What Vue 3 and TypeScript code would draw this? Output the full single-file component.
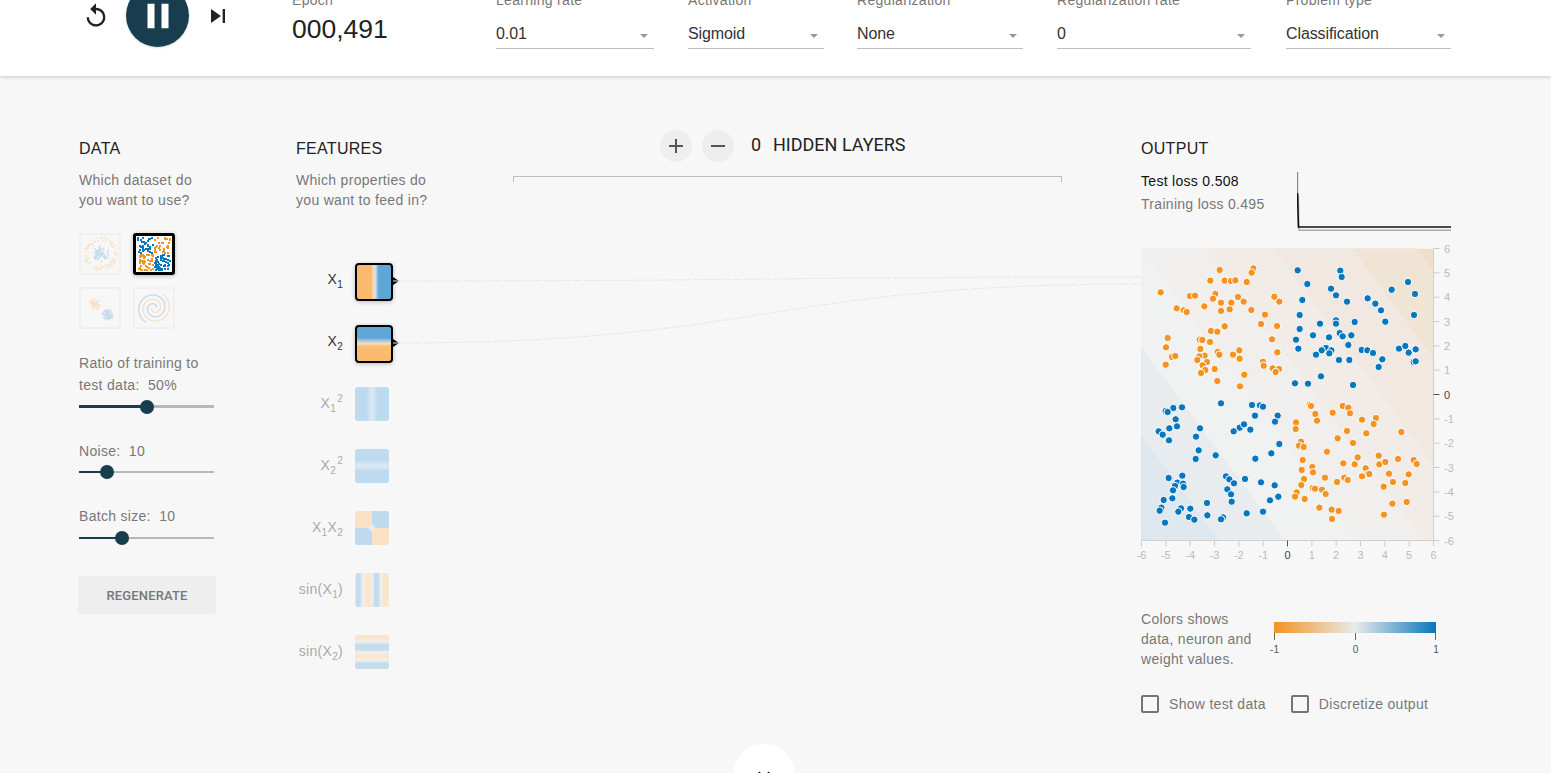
<template>
  <div class="page">
    <header class="top">
      <div class="controls">
        <svg class="icon replay" viewBox="0 0 24 24"><path d="M12 5V1L7 6l5 5V7c3.31 0 6 2.69 6 6s-2.69 6-6 6-6-2.69-6-6H4c0 4.42 3.58 8 8 8s8-3.58 8-8-3.58-8-8-8z" /></svg>
        <div class="play">
          <svg viewBox="0 0 24 24"><path d="M6 19h4V5H6v14zm8-14v14h4V5h-4z" /></svg>
        </div>
        <svg class="icon skip" viewBox="0 0 24 24"><path d="M6 18l8.5-6L6 6v12zM16 6v12h2V6h-2z" /></svg>
      </div>
      <div class="epoch">
        <div class="top-label">Epoch</div>
        <div class="epoch-value">000,491</div>
      </div>
      <div class="selects">
        <div v-for="s in selects" :key="s.label" class="select" :style="{ width: s.width + 'px', marginRight: s.gap + 'px' }">
          <div class="top-label">{{ s.label }}</div>
          <div class="select-field">
            <span>{{ s.value }}</span>
            <i class="caret"></i>
          </div>
        </div>
      </div>
    </header>

    <main class="main">
      <section class="data">
        <h4>DATA</h4>
        <p class="desc">Which dataset do<br />you want to use?</p>
        <div class="datasets">
          <div class="dataset">
            <svg viewBox="0 0 38 38"><rect v-for="(p, i) in circleDots" :key="i" :x="p.x" :y="p.y" width="1.6" height="1.6" :fill="p.c" /></svg>
          </div>
          <div class="dataset selected">
            <svg viewBox="0 0 36 36"><rect v-for="(p, i) in xorDots" :key="i" :x="p.x" :y="p.y" width="2" height="2" :fill="p.c" /></svg>
          </div>
          <div class="dataset">
            <svg viewBox="0 0 38 38"><rect v-for="(p, i) in gaussDots" :key="i" :x="p.x" :y="p.y" width="1.6" height="1.6" :fill="p.c" /></svg>
          </div>
          <div class="dataset">
            <svg viewBox="0 0 38 38">
              <path :d="spiralA" fill="none" :stroke="BLUE" stroke-width="1.4" />
              <path :d="spiralB" fill="none" :stroke="ORANGE" stroke-width="1.4" />
            </svg>
          </div>
        </div>

        <div v-for="c in sliders" :key="c.key" class="control">
          <div class="control-label" v-html="c.label"></div>
          <div class="slider">
            <div class="slider-fill" :style="{ width: c.pos + 'px' }"></div>
            <div class="slider-knob" :style="{ left: c.pos + 'px' }"></div>
          </div>
        </div>

        <button class="regen">REGENERATE</button>
      </section>

      <section class="features">
        <h4>FEATURES</h4>
        <p class="desc">Which properties do<br />you want to feed in?</p>
        <div class="feature-list">
          <div v-for="f in features" :key="f.key" class="feature" :class="{ active: f.active }">
            <div class="feature-label">
              <template v-for="(part, i) in f.parts" :key="i">
                <sub v-if="part.sub">{{ part.t }}</sub>
                <sup v-else-if="part.sup">{{ part.t }}</sup>
                <span v-else>{{ part.t }}</span>
              </template>
            </div>
            <div class="feature-thumb" :class="f.key"></div>
          </div>
        </div>
      </section>

      <section class="network">
        <div class="layers">
          <button class="round"><svg viewBox="0 0 24 24"><path d="M19 13h-6v6h-2v-6H5v-2h6V5h2v6h6v2z" /></svg></button>
          <button class="round"><svg viewBox="0 0 24 24"><path d="M19 13H5v-2h14v2z" /></svg></button>
          <span class="layer-count">0</span>
          <span class="layer-text">HIDDEN LAYERS</span>
        </div>
        <div class="bracket"></div>
      </section>

      <section class="output">
        <h4>OUTPUT</h4>
        <div class="loss-row">
          <div class="loss-text">
            <div class="test-loss">Test loss 0.508</div>
            <div class="train-loss">Training loss 0.495</div>
          </div>
          <svg class="loss-chart" width="154" height="60">
            <path d="M0.5 0V21" stroke="#888" stroke-width="1.4" fill="none" />
            <path d="M1 21L1.6 56.5H154" stroke="#aaa" stroke-width="1.4" fill="none" transform="translate(0.4 1.8)" />
            <path d="M0.5 21L1.4 55H154" stroke="#111" stroke-width="1.6" fill="none" />
          </svg>
        </div>

        <svg class="plot" width="310" height="320">
          <svg x="0" y="0.5" width="292" height="292">
            <rect width="292" height="292" fill="#efdfc8" />
            <polygon v-for="b in bands" :key="b.u" :points="b.points" :fill="b.c" />
            <circle v-for="(p, i) in plotPoints" :key="i" :cx="p.x" :cy="p.y" r="3.7" :fill="p.c" stroke="#fff" stroke-width="1" />
          </svg>
          <path d="M292.5 0V293M0.5 292.5H293" stroke="#d0d0d0" fill="none" />
          <g v-for="t in ticks" :key="t.v">
            <path :d="`M292.5 ${t.y}h6`" :stroke="t.v === 0 ? '#555' : '#ccc'" fill="none" />
            <path :d="`M${t.x} 292.5v6`" :stroke="t.v === 0 ? '#555' : '#ccc'" fill="none" />
            <text class="tick" x="303" :y="t.y + 4" :fill="t.v === 0 ? '#444' : '#bbb'">{{ t.v }}</text>
            <text class="tick" :x="t.x" y="311" text-anchor="middle" :fill="t.v === 0 ? '#444' : '#bbb'">{{ t.v }}</text>
          </g>
        </svg>

        <div class="legend">
          <p class="legend-text">Colors shows<br />data, neuron and<br />weight values.</p>
          <svg class="legend-bar" width="172" height="36">
            <defs>
              <linearGradient id="legendGrad">
                <stop offset="0" stop-color="#f59322" />
                <stop offset="0.5" stop-color="#e8eaeb" />
                <stop offset="1" stop-color="#0877bd" />
              </linearGradient>
            </defs>
            <rect x="3" y="0" width="162" height="11" fill="url(#legendGrad)" />
            <path d="M3.5 11v7M84.5 11v7M164.5 11v7" stroke="#666" fill="none" />
            <text class="legend-tick" x="3.5" y="31" text-anchor="middle">-1</text>
            <text class="legend-tick" x="84.5" y="31" text-anchor="middle">0</text>
            <text class="legend-tick" x="165" y="31" text-anchor="middle">1</text>
          </svg>
        </div>

        <div class="checks">
          <label class="check"><i class="box"></i>Show test data</label>
          <label class="check"><i class="box"></i>Discretize output</label>
        </div>
      </section>

      <!-- links from the inputs to the output heatmap -->
      <svg class="links" width="748" height="80">
        <path d="M0 11C374 11 374 7 748 7" />
        <path d="M0 73C374 73 374 14 748 14" />
      </svg>
    </main>

    <div class="more">
      <svg viewBox="0 0 24 24"><path d="M7.41 8.59L12 13.17l4.59-4.58L18 10l-6 6-6-6 1.41-1.41z" /></svg>
    </div>
  </div>
</template>

<script setup lang="ts">
const ORANGE = "#f59322";
const BLUE = "#0877bd";

interface Dot {
  x: number;
  y: number;
  c: string;
}

const selects = [
  { label: "Learning rate", value: "0.01", width: 158, gap: 34 },
  { label: "Activation", value: "Sigmoid", width: 136, gap: 33 },
  { label: "Regularization", value: "None", width: 166, gap: 34 },
  { label: "Regularization rate", value: "0", width: 194, gap: 35 },
  { label: "Problem type", value: "Classification", width: 165, gap: 0 },
];

const sliders = [
  { key: "ratio", label: "Ratio of training to<br>test data:&nbsp; 50%", pos: 68 },
  { key: "noise", label: "Noise:&nbsp; 10", pos: 27.5 },
  { key: "batch", label: "Batch size:&nbsp; 10", pos: 42.5 },
];

const features = [
  { key: "x1", active: true, parts: [{ t: "X" }, { t: "1", sub: true }] },
  { key: "x2", active: true, parts: [{ t: "X" }, { t: "2", sub: true }] },
  { key: "x1sq", active: false, parts: [{ t: "X" }, { t: "1", sub: true }, { t: "2", sup: true }] },
  { key: "x2sq", active: false, parts: [{ t: "X" }, { t: "2", sub: true }, { t: "2", sup: true }] },
  { key: "x1x2", active: false, parts: [{ t: "X" }, { t: "1", sub: true }, { t: "X" }, { t: "2", sub: true }] },
  { key: "sinx1", active: false, parts: [{ t: "sin(X" }, { t: "1", sub: true }, { t: ")" }] },
  { key: "sinx2", active: false, parts: [{ t: "sin(X" }, { t: "2", sub: true }, { t: ")" }] },
];

// small seeded generator, so the thumbnails stay the same every run
function makeRandom(seed: number) {
  let s = seed;
  return () => {
    s = (s + 0x6d2b79f5) | 0;
    let t = Math.imul(s ^ (s >>> 15), 1 | s);
    t = (t + Math.imul(t ^ (t >>> 7), 61 | t)) ^ t;
    return ((t ^ (t >>> 14)) >>> 0) / 4294967296;
  };
}

function buildXor(): Dot[] {
  const rnd = makeRandom(7);
  const dots: Dot[] = [];
  for (let i = 0; i < 175; i++) {
    const x = 1 + Math.floor(rnd() * 33);
    const y = 1 + Math.floor(rnd() * 33);
    if (x === 17 || y === 17) continue;
    dots.push({ x, y, c: x < 17 === y < 17 ? BLUE : ORANGE });
  }
  return dots;
}

function buildCircle(): Dot[] {
  const rnd = makeRandom(11);
  const dots: Dot[] = [];
  for (let i = 0; i < 170; i++) {
    const a = rnd() * Math.PI * 2;
    const inner = i % 2 === 0;
    const r = inner ? rnd() * 8 : 12.5 + rnd() * 4.5;
    dots.push({ x: 19 + Math.cos(a) * r, y: 18 + Math.sin(a) * r, c: inner ? BLUE : ORANGE });
  }
  return dots;
}

function buildGauss(): Dot[] {
  const rnd = makeRandom(23);
  const dots: Dot[] = [];
  for (let i = 0; i < 160; i++) {
    const a = rnd() * Math.PI * 2;
    const r = rnd() * 5.5;
    const first = i % 2 === 0;
    dots.push({
      x: (first ? 13 : 26) + Math.cos(a) * r,
      y: (first ? 14 : 25) + Math.sin(a) * r,
      c: first ? ORANGE : BLUE,
    });
  }
  return dots;
}

function spiral(offset: number): string {
  let d = "";
  for (let t = 0; t <= 1; t += 0.02) {
    const r = 2 + t * 15;
    const a = offset + t * Math.PI * 3.4;
    d += `${d ? "L" : "M"}${(19 + Math.cos(a) * r).toFixed(1)} ${(19 - Math.sin(a) * r).toFixed(1)}`;
  }
  return d;
}

const xorDots = buildXor();
const circleDots = buildCircle();
const gaussDots = buildGauss();
const spiralA = spiral(0);
const spiralB = spiral(Math.PI);

// heatmap bands run parallel, y - 1.35x = u
const bandStops: [number, string][] = [
  [-372, "#f0e4d5"],
  [-285, "#f1e9e1"],
  [-178, "#f2ece8"],
  [-89, "#f1efed"],
  [0, "#f0f1f1"],
  [98, "#e8ecef"],
  [186, "#e0e8ef"],
  [279, "#d9e5ef"],
];
const bands = bandStops.map(([u, c]) => ({
  u,
  c,
  points: `-10,${u - 13.5} 310,${u + 418.5} 310,900 -10,900`,
}));

const orangeTop = [370,85,365,98,269,90,241,122,284,122,303,123,316,121,350,126,92,157,180,168,195,167,256,162,249,176,273,188,304,188,324,171,341,185,433,170,448,185,140,205,161,211,170,216,223,199,273,213,299,208,364,210,405,224,393,252,441,258,284,259,243,273,262,275,113,294,108,322,126,351,136,348,107,374,209,299,217,300,240,306,211,327,426,298,442,337,263,336,268,344,328,331,309,344,329,356,224,347,208,349,202,360,231,366,218,376,226,390,213,399,254,387,399,365,401,377,428,385,447,387,437,396,343,404,262,423,330,439];
const blueTop = [503,91,631,92,635,111,532,132,603,146,618,166,651,185,517,180,713,175,736,191,753,211,785,149,834,126,855,162,852,225,509,225,766,245,618,241,618,251,570,251,674,246,509,267,549,286,597,292,629,279,638,289,664,286,498,299,505,326,655,315,695,330,712,331,729,339,807,326,826,318,836,338,857,328,588,324,575,331,604,331,598,340,558,344,627,360,658,360,757,358,746,381,851,366,857,364,495,430,534,431,573,409,669,435];
const blueBottom = [273,10,366,15,390,16,399,20,156,22,130,24,107,33,113,36,375,47,443,47,137,58,435,65,141,79,118,85,86,94,98,104,117,121,210,85,198,110,329,83,342,73,311,94,361,89,448,132,206,151,197,177,257,166,424,160,376,176,116,234,157,227,142,248,159,251,135,258,161,261,129,271,127,295,101,300,94,323,89,332,153,325,145,335,181,326,177,351,193,359,105,368,231,309,232,346,288,229,298,238,312,250,345,237,393,247,434,256,292,268,303,283,305,305,445,290,420,301,350,340,399,335,279,352,273,358];
const orangeBottom = [539,14,543,18,608,38,556,42,561,62,638,18,655,23,660,40,696,59,738,54,731,72,498,67,497,87,651,93,709,100,814,96,623,115,669,129,513,125,507,137,521,141,591,155,518,180,683,172,746,167,748,193,766,186,640,190,674,193,804,177,851,180,860,192,515,210,547,201,549,217,707,205,712,222,718,222,777,221,836,223,696,229,522,237,585,233,643,233,653,240,621,246,789,246,826,249,761,260,514,255,548,264,555,266,576,269,500,277,495,290,587,282,524,297,830,306,787,311,568,323,605,329,626,333,606,357,762,344];

function toPlot(list: number[], top: number, c: string): Dot[] {
  const out: Dot[] = [];
  for (let i = 0; i < list.length; i += 2) {
    out.push({ x: list[i] / 3 - 11, y: top + list[i + 1] / 3 - 248.5, c });
  }
  return out;
}

const plotPoints = [
  ...toPlot(orangeTop, 240, ORANGE),
  ...toPlot(blueTop, 240, BLUE),
  ...toPlot(blueBottom, 400, BLUE),
  ...toPlot(orangeBottom, 400, ORANGE),
];

const ticks = Array.from({ length: 13 }, (_, i) => ({
  v: i - 6,
  x: 0.5 + (i * 292) / 12,
  y: 292.5 - (i * 292) / 12,
}));
</script>

<style scoped>
.page {
  position: relative;
  height: 789px;
  margin-top: -16px;
  background: #f7f7f7;
  font-family: "Liberation Sans", Arial, sans-serif;
  font-size: 14px;
  letter-spacing: 0.3px;
  color: #777;
  overflow: hidden;
}
.top {
  position: relative;
  display: flex;
  height: 92px;
  background: #fff;
  box-shadow: 0 1px 4px rgba(0, 0, 0, 0.2);
  box-sizing: border-box;
  padding-left: 82px;
}
.controls {
  display: flex;
  align-items: center;
  width: 210px;
  height: 63px;
}
.icon {
  width: 28px;
  height: 28px;
  fill: #222;
}
.play {
  display: flex;
  align-items: center;
  justify-content: center;
  width: 63px;
  height: 63px;
  margin-left: 16px;
  border-radius: 50%;
  background: #183d4e;
  box-shadow: 0 1px 2px rgba(0, 0, 0, 0.15);
}
.play svg {
  width: 42px;
  height: 42px;
  fill: #fff;
}
.skip {
  margin-left: 15px;
}
.epoch {
  width: 204px;
  padding-top: 8px;
}
.top-label {
  line-height: 16px;
  color: #777;
}
.epoch-value {
  margin-top: 6px;
  font-size: 26.5px;
  line-height: 30px;
  letter-spacing: 0;
  color: #222;
}
.selects {
  display: flex;
  padding-top: 8px;
}
.select-field {
  position: relative;
  display: flex;
  height: 24px;
  margin-top: 16px;
  line-height: 20px;
  font-size: 16px;
  letter-spacing: -0.1px;
  color: #333;
  border-bottom: 1px solid #bdbdbd;
  box-sizing: content-box;
}
.caret {
  position: absolute;
  right: 6px;
  top: 10px;
  width: 0;
  height: 0;
  border-left: 4px solid transparent;
  border-right: 4px solid transparent;
  border-top: 4px solid #999;
}
.main {
  position: relative;
  display: flex;
  padding: 63px 0 0 79px;
}
h4 {
  margin: 0;
  font-size: 16px;
  font-weight: 400;
  line-height: 20px;
  color: #222;
}
.desc {
  margin: 11px 0 0;
  line-height: 20px;
}
.data {
  width: 137px;
  margin-right: 80px;
}
.datasets {
  display: grid;
  grid-template-columns: 42px 42px;
  gap: 12px;
  margin-top: 23px;
}
.dataset {
  width: 42px;
  height: 42px;
  box-sizing: border-box;
  border: 2px solid #f0f0f0;
  border-radius: 3px;
}
.dataset svg {
  display: block;
  width: 38px;
  height: 38px;
  opacity: 0.2;
}
.dataset.selected {
  border: 3px solid #000;
  background: #fff;
  box-shadow: 0 1px 4px rgba(0, 0, 0, 0.25);
}
.dataset.selected svg {
  width: 36px;
  height: 36px;
  opacity: 1;
}
.control {
  margin-top: 23px;
}
.control + .control {
  margin-top: 32px;
}
.control-label {
  line-height: 22px;
}
.slider {
  position: relative;
  height: 3px;
  margin-top: 9px;
  background: #b8b8b8;
  width: 135px;
}
.control + .control .slider {
  height: 2px;
}
.control:last-of-type .slider {
  margin-top: 10px;
}
.slider-fill {
  height: 100%;
  background: #183d4e;
}
.slider-knob {
  position: absolute;
  top: -5.5px;
  width: 14px;
  height: 14px;
  margin-left: -7px;
  border-radius: 50%;
  background: #183d4e;
}
.control + .control .slider-knob {
  top: -6px;
}
.regen {
  display: block;
  width: 138px;
  height: 38px;
  margin: 37px 0 0 -1px;
  border: none;
  border-radius: 3px;
  background: #eee;
  font-family: Roboto, sans-serif;
  font-size: 13px;
  font-weight: 500;
  letter-spacing: 0.15px;
  color: #777;
}
.features {
  width: 217px;
}
.feature-list {
  margin-top: 53px;
}
.feature {
  display: flex;
  align-items: flex-start;
  height: 62px;
}
.feature-label {
  width: 47px;
  margin-right: 12px;
  text-align: right;
  white-space: nowrap;
  line-height: 32px;
  color: #aaa;
}
.feature.active .feature-label {
  color: #333;
}
sub,
sup {
  font-size: 10px;
  line-height: 0;
}
sup {
  margin-left: 1px;
}
.feature-thumb {
  position: relative;
  width: 34px;
  height: 34px;
  border-radius: 3px;
  box-sizing: border-box;
}
.feature.active .feature-thumb {
  width: 38px;
  height: 38px;
  border: 2px solid #000;
  border-radius: 4px;
  box-shadow: 0 1px 4px rgba(0, 0, 0, 0.25);
}
.feature.active .feature-thumb::after {
  content: "";
  position: absolute;
  left: 36px;
  top: 12px;
  border-left: 6px solid #000;
  border-top: 4px solid transparent;
  border-bottom: 4px solid transparent;
}
.x1 {
  background: linear-gradient(to right, #fbba6e 42%, #f8d8b8 48%, #cfe0ea 54%, #5fa6d6 64%);
}
.x2 {
  background: linear-gradient(to bottom, #5fa6d6 32%, #a4c8e0 40%, #f5dcc0 49%, #fbba6e 58%);
}
.x1sq {
  background: linear-gradient(to right, #bedaef 34%, #d8e7f1 46%, #d8e7f1 54%, #bedaef 66%);
}
.x2sq {
  background: linear-gradient(to bottom, #bedaef 34%, #d8e7f1 46%, #d8e7f1 54%, #bedaef 66%);
}
.x1x2 {
  background:
    radial-gradient(circle at 50% 50%, #e8eef0 0, #e8eef0 6%, transparent 16%),
    conic-gradient(#bedaef 0 25%, #fbe0c4 0 50%, #bedaef 0 75%, #fbe0c4 0);
}
.sinx1 {
  background: linear-gradient(to right, #dbe9f2 0, #c3dcee 6%, #c3dcee 14%, #f2f0ee 24%, #fae5cf 32%, #fae5cf 44%, #f2f0ee 51%, #c3dcee 58%, #c3dcee 68%, #f2f0ee 76%, #fae5cf 84%);
}
.sinx2 {
  background: linear-gradient(to bottom, #fae5cf 0, #fae5cf 12%, #f2f0ee 20%, #c3dcee 29%, #c3dcee 43%, #f2f0ee 51%, #fae5cf 58%, #fae5cf 66%, #f2f0ee 74%, #c3dcee 84%);
}
.network {
  width: 549px;
  margin: -9px 79px 0 0;
}
.layers {
  display: flex;
  align-items: center;
  padding-left: 147px;
}
.round {
  display: flex;
  align-items: center;
  justify-content: center;
  width: 32px;
  height: 32px;
  margin-right: 10px;
  padding: 0;
  border: none;
  border-radius: 50%;
  background: #eee;
}
.round svg {
  width: 24px;
  height: 24px;
  fill: #555;
}
.layer-count,
.layer-text {
  margin-top: -3px;
  font-family: Roboto, sans-serif;
  font-size: 18px;
  letter-spacing: 0;
  color: #222;
}
.layer-count {
  margin-left: 7px;
  width: 22px;
}
.bracket {
  height: 5px;
  margin-top: 14px;
  border-top: 1px solid #bdbdbd;
  border-left: 1px solid #bdbdbd;
  border-right: 1px solid #bdbdbd;
}
.output {
  width: 310px;
}
.loss-row {
  display: flex;
  height: 78px;
  margin-top: 11px;
}
.loss-text {
  width: 156px;
  line-height: 23px;
}
.test-loss {
  color: #111;
}
.loss-chart {
  display: block;
  margin-top: 2px;
}
.plot {
  display: block;
  overflow: visible;
}
.tick {
  font-size: 11px;
  letter-spacing: 0;
}
.legend {
  display: flex;
  margin-top: 41px;
}
.legend-text {
  width: 130px;
  margin: 0;
  line-height: 20px;
}
.legend-bar {
  display: block;
  margin-top: 13px;
  overflow: visible;
}
.legend-tick {
  font-size: 10px;
  letter-spacing: 0;
  fill: #555;
}
.checks {
  display: flex;
  gap: 25px;
  margin-top: 26px;
}
.check {
  display: flex;
  align-items: center;
  line-height: 18px;
}
.box {
  width: 18px;
  height: 18px;
  margin-right: 10px;
  box-sizing: border-box;
  border: 2px solid #757575;
  border-radius: 2px;
}
.links {
  position: absolute;
  left: 393px;
  top: 194px;
  pointer-events: none;
}
.links path {
  fill: none;
  stroke: #e8e8e8;
  stroke-width: 1;
  stroke-dasharray: 8 2;
}
.more {
  position: absolute;
  left: 733px;
  top: 760px;
  width: 62px;
  height: 62px;
  border-radius: 50%;
  background: #fff;
}
.more svg {
  display: block;
  width: 24px;
  height: 24px;
  margin: 19px auto 0;
  fill: #222;
}
</style>

<style>
html,
body {
  margin: 0;
  overflow: hidden;
}
</style>
